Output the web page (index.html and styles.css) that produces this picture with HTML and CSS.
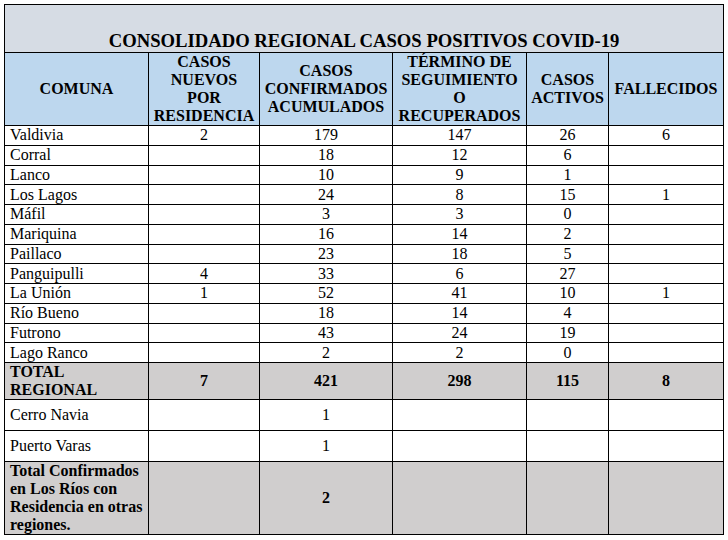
FILE: index.html
```html
<!DOCTYPE html>
<html lang="es">
<head>
<meta charset="utf-8">
<title>Consolidado Regional Casos Positivos COVID-19</title>
<link rel="stylesheet" href="styles.css">
</head>
<body>
<table class="report">
  <colgroup>
    <col class="c-comuna">
    <col class="c-nuevos">
    <col class="c-conf">
    <col class="c-term">
    <col class="c-act">
    <col class="c-fall">
  </colgroup>
  <tr class="row-title">
    <td colspan="6" class="title">CONSOLIDADO REGIONAL CASOS POSITIVOS COVID-19</td>
  </tr>
  <tr class="row-head">
    <th>COMUNA</th>
    <th>CASOS<br>NUEVOS<br>POR<br>RESIDENCIA</th>
    <th>CASOS<br>CONFIRMADOS<br>ACUMULADOS</th>
    <th>TÉRMINO DE<br>SEGUIMIENTO<br>O<br>RECUPERADOS</th>
    <th>CASOS<br>ACTIVOS</th>
    <th>FALLECIDOS</th>
  </tr>
  <tr class="row-data"><td class="name">Valdivia</td><td>2</td><td>179</td><td>147</td><td>26</td><td>6</td></tr>
  <tr class="row-data"><td class="name">Corral</td><td></td><td>18</td><td>12</td><td>6</td><td></td></tr>
  <tr class="row-data"><td class="name">Lanco</td><td></td><td>10</td><td>9</td><td>1</td><td></td></tr>
  <tr class="row-data"><td class="name">Los Lagos</td><td></td><td>24</td><td>8</td><td>15</td><td>1</td></tr>
  <tr class="row-data"><td class="name">Máfil</td><td></td><td>3</td><td>3</td><td>0</td><td></td></tr>
  <tr class="row-data"><td class="name">Mariquina</td><td></td><td>16</td><td>14</td><td>2</td><td></td></tr>
  <tr class="row-data"><td class="name">Paillaco</td><td></td><td>23</td><td>18</td><td>5</td><td></td></tr>
  <tr class="row-data"><td class="name">Panguipulli</td><td>4</td><td>33</td><td>6</td><td>27</td><td></td></tr>
  <tr class="row-data"><td class="name">La Unión</td><td>1</td><td>52</td><td>41</td><td>10</td><td>1</td></tr>
  <tr class="row-data"><td class="name">Río Bueno</td><td></td><td>18</td><td>14</td><td>4</td><td></td></tr>
  <tr class="row-data"><td class="name">Futrono</td><td></td><td>43</td><td>24</td><td>19</td><td></td></tr>
  <tr class="row-data"><td class="name">Lago Ranco</td><td></td><td>2</td><td>2</td><td>0</td><td></td></tr>
  <tr class="row-total"><td class="name">TOTAL<br>REGIONAL</td><td>7</td><td>421</td><td>298</td><td>115</td><td>8</td></tr>
  <tr class="row-ext"><td class="name">Cerro Navia</td><td></td><td>1</td><td></td><td></td><td></td></tr>
  <tr class="row-ext"><td class="name">Puerto Varas</td><td></td><td>1</td><td></td><td></td><td></td></tr>
  <tr class="row-sum"><td class="name">Total Confirmados en Los Ríos con Residencia en otras regiones.</td><td></td><td>2</td><td></td><td></td><td></td></tr>
</table>
</body>
</html>
```
FILE: styles.css
```css
html, body {
  margin: 0;
  padding: 0;
  background: #ffffff;
}

body {
  padding: 4px 0 0 4px;
  font-family: "Liberation Serif", "Times New Roman", serif;
  color: #000000;
}

.report {
  border-collapse: collapse;
  table-layout: fixed;
  width: 719px;
  font-size: 16px;
  line-height: 18px;
}

.c-comuna { width: 144px; }
.c-nuevos { width: 111px; }
.c-conf { width: 133px; }
.c-term { width: 134px; }
.c-act { width: 82px; }
.c-fall { width: 115px; }

.report td,
.report th {
  border: 1px solid #000000;
  padding: 0 4px;
  text-align: center;
  vertical-align: middle;
}

.row-title { height: 48px; }

.title {
  background: #d6dce4;
  font-weight: bold;
  font-size: 18.67px;
  line-height: 20px;
  vertical-align: bottom !important;
  padding-bottom: 1px !important;
}

.row-head { height: 72px; }

.row-head th {
  background: #bdd7ee;
  font-weight: bold;
  padding: 0 2px;
}

.row-data { height: 19.75px; }

.report td.name {
  text-align: left;
  padding-left: 5px;
  padding-right: 5px;
}

.row-total { height: 37px; }

.row-total td,
.row-sum td {
  background: #d0cece;
  font-weight: bold;
}

.row-ext { height: 31px; }

.row-sum { height: 72px; }
```
